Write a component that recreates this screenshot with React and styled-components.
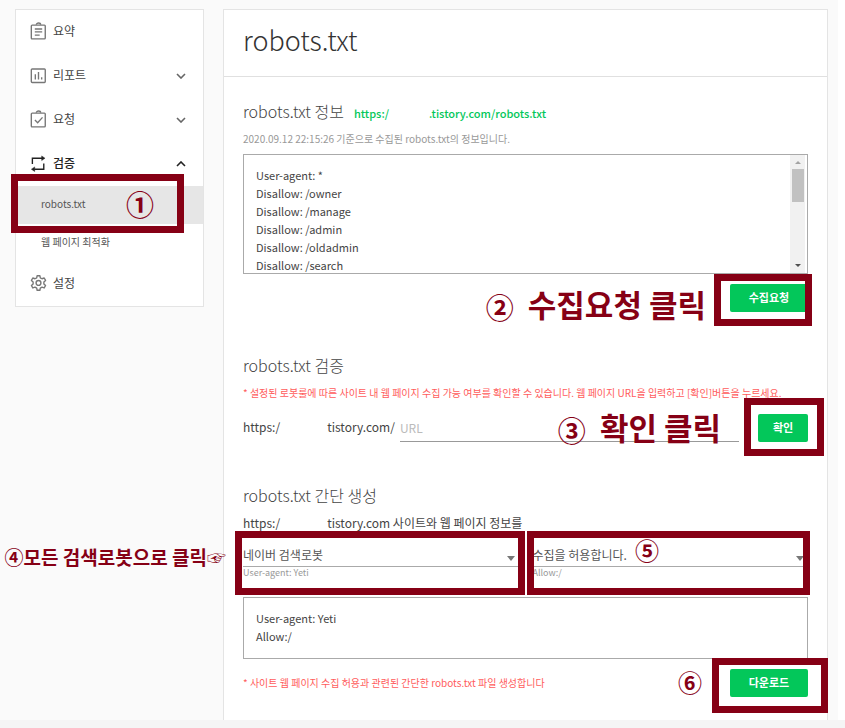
import React, { useState } from "react";
import styled, { createGlobalStyle } from "styled-components";

const GlobalStyle = createGlobalStyle`
  * {
    box-sizing: border-box;
  }

  body {
    margin: 0;
    background: #fff;
    color: #444;
    font-family: "Noto Sans CJK KR", "Noto Sans", sans-serif;
    font-size: 12px;
  }

  button,
  input,
  select,
  textarea {
    font-family: inherit;
    color: inherit;
  }
`;

const Page = styled.div`
  display: flex;
  flex-direction: column;
  min-height: 100vh;
`;

const Layout = styled.div`
  flex: 1;
  display: grid;
  grid-template-columns: 189px minmax(0, 1fr);
  gap: 19px;
  margin-right: 7px;
  padding: 9px 10px 0 15px;
  background: #fafafa;
`;

const PageEnd = styled.footer`
  height: 8px;
  background: #f5f5f5;
`;

const Sidebar = styled.nav`
  align-self: start;
  background: #fff;
  border: 1px solid #e4e4e4;
`;

const NavButton = styled.button`
  display: flex;
  align-items: center;
  gap: 6px;
  width: 100%;
  height: 44px;
  padding: 0 17px 0 14px;
  border: 0;
  background: none;
  color: ${({ $open }) => ($open ? "#222" : "#444")};
  font-size: 12px;
  font-weight: ${({ $open }) => ($open ? 500 : 400)};
  text-align: left;
  cursor: pointer;
`;

const NavLabel = styled.span`
  flex: 1;
  padding-bottom: 4px;
`;

const SubItem = styled.div`
  position: relative;
  background: ${({ $active }) => ($active ? "#e6e6e6" : "#fff")};
`;

const SubLink = styled.a`
  display: block;
  height: 38px;
  padding-left: 25px;
  color: #555;
  font-size: 10px;
  line-height: 36px;
  text-decoration: none;
`;

const Panel = styled.main`
  background: #fff;
  border: 1px solid #e4e4e4;
  border-bottom: 0;
`;

const Title = styled.h1`
  margin: 0;
  padding: 0 19px 6px;
  border-bottom: 1px solid #e0e0e0;
  color: #333;
  font-size: 27px;
  font-weight: 300;
  line-height: 60px;
`;

const Content = styled.div`
  display: grid;
  gap: 42px;
  padding: 23px 19px 22px;
`;

const Section = styled.section`
  display: flex;
  flex-direction: column;
`;

const HeadingRow = styled.div`
  display: flex;
  align-items: baseline;
  gap: 10px;
  height: 24px;
  margin-bottom: 6px;
`;

const Heading = styled.h2`
  margin: 0;
  color: #444;
  font-size: 16px;
  font-weight: 300;
  line-height: 22px;
`;

const SiteLink = styled.a`
  color: #03c75a;
  font-size: 11px;
  font-weight: 500;
  text-decoration: none;
`;

const Blank = styled.span`
  display: inline-block;
  width: ${({ $wide }) => ($wide ? "47px" : "40px")};
`;

const Caption = styled.p`
  margin: 0;
  color: ${({ $warn }) => ($warn ? "#ff5c5c" : "#999")};
  font-size: 10px;
  line-height: 18px;
`;

const Sentence = styled.p`
  margin: 0 0 10px;
  line-height: 18px;
`;

const CodeBox = styled.div`
  display: flex;
  height: ${({ $tall }) => ($tall ? "120px" : "62px")};
  margin-top: ${({ $tall }) => ($tall ? "6px" : "18px")};
  padding-right: 2px;
  border: 1px solid #aaa;
`;

const Code = styled.textarea`
  flex: 1;
  padding: 11px 12px 0;
  border: 0;
  outline: 0;
  background: none;
  font-size: 11px;
  line-height: 18px;
  overflow: hidden;
  resize: none;
`;

const ScrollTrack = styled.div`
  display: flex;
  flex-direction: column;
  align-items: center;
  width: 15px;
  background: #f1f1f1;
`;

const ScrollThumb = styled.div`
  width: 12px;
  height: 33px;
  margin-bottom: auto;
  background: #c1c1c1;
`;

const ScrollArrow = styled.svg`
  width: 14px;
  height: 14px;
  fill: ${({ $muted }) => ($muted ? "#a3a3a3" : "#505050")};
`;

const Actions = styled.div`
  display: flex;
  align-items: center;
  justify-content: ${({ $end }) => ($end ? "flex-end" : "space-between")};
  margin-top: 10px;
`;

const ButtonSlot = styled.div`
  position: relative;
`;

const Button = styled.button`
  display: block;
  width: ${({ $small }) => ($small ? "50px" : "78px")};
  height: 28px;
  padding: 0 0 2px;
  border: 0;
  border-radius: 2px;
  background: #03c75a;
  color: #fff;
  font-size: 11px;
  font-weight: 700;
  cursor: pointer;
`;

const UrlForm = styled.form`
  display: flex;
  gap: 19px;
  margin-top: 12px;
`;

const UrlField = styled.label`
  flex: 1;
  display: flex;
  gap: 5px;
  line-height: 26px;
`;

const UrlInput = styled.input`
  flex: 1;
  min-width: 0;
  height: 28px;
  padding: 0;
  border: 0;
  border-bottom: 1px solid #999;
  outline: 0;
  background: none;
  font-size: 12px;

  &::placeholder {
    color: #bbb;
  }
`;

const Fields = styled.div`
  display: grid;
  grid-template-columns: 1fr 1fr;
  gap: 14px;
`;

const Field = styled.div`
  position: relative;
`;

const Select = styled.select`
  display: block;
  width: 100%;
  height: 25px;
  padding: 0 20px 0 0;
  border: 0;
  border-bottom: 1px solid #aaa;
  border-radius: 0;
  outline: 0;
  background: none;
  color: #555;
  font-size: 12px;
  appearance: none;
`;

const Caret = styled.svg`
  position: absolute;
  top: 14px;
  right: 4px;
  width: 8px;
  height: 5px;
  fill: #777;
  pointer-events: none;
`;

const Hint = styled.label`
  display: block;
  color: #999;
  font-size: 9px;
  line-height: 12px;
`;

// Red marks of the guide, laid over the controls they point at
const Frame = styled.div`
  position: absolute;
  top: ${({ $top }) => $top}px;
  right: ${({ $right }) => $right}px;
  bottom: ${({ $bottom }) => $bottom}px;
  left: ${({ $left }) => $left}px;
  z-index: 1;
  border: 7px solid #860015;
  pointer-events: none;
`;

const Note = styled.div`
  position: absolute;
  top: ${({ $top }) => $top}px;
  right: ${({ $right }) => $right};
  z-index: 2;
  display: flex;
  align-items: center;
  gap: 14px;
  color: #860015;
  font-size: ${({ $size }) => $size || 19}px;
  font-weight: 700;
  line-height: 32px;
  white-space: nowrap;
  pointer-events: none;
`;

const Step = styled.span`
  padding-top: 6px;
  font-size: 28px;
`;

const IconBase = styled.svg`
  width: 17px;
  height: 19px;
  margin-bottom: 2px;
  fill: none;
  stroke: ${({ $dark }) => ($dark ? "#222" : "#777")};
  stroke-width: 1.3;
`;

const ChevronSvg = styled.svg`
  width: 10px;
  height: 6px;
  fill: none;
  stroke: ${({ $up }) => ($up ? "#222" : "#666")};
  stroke-width: 1.6;
`;

const icons = {
  summary: (
    <>
      <rect x="1.2" y="3" width="13.2" height="13" rx="0.8" />
      <path d="M6 2.6a2 1.6 0 0 1 4 0M4.5 6.6h7M4.5 9.4h7M4.5 12.4h4.6" />
    </>
  ),
  report: (
    <>
      <rect x="1.2" y="2.8" width="13.2" height="12.8" rx="0.8" />
      <path d="M5 7.8v5M8 5.6v7.2M11 10.6v2.2" />
    </>
  ),
  request: (
    <>
      <rect x="1.2" y="3" width="13.2" height="13" rx="0.8" />
      <path d="M6 2.6a2 1.6 0 0 1 4 0M4.6 9.4l2.6 2.6 4.6-5" />
    </>
  ),
  verify: (
    <>
      <path d="M2.2 9.4V4h9.6M13 9v5.4H4" />
      <path d="M11 1.8L14.2 4 11 6.2zM4.4 12.2l-3.2 2.2 3.2 2.2z" fill="#222" strokeWidth="0.4" />
    </>
  ),
  settings: (
    <>
      <path
        d="M6.7 1.6h2.6l.4 2 1.6.9 2.1-.7 1.3 2.3-1.6 1.5v1.8l1.6 1.5-1.3 2.3-2.1-.7-1.6.9-.4 2H6.7l-.4-2-1.6-.9-2.1.7-1.3-2.3 1.6-1.5V7.6L1.3 6.1l1.3-2.3 2.1.7 1.6-.9z"
        strokeLinejoin="round"
      />
      <circle cx="8" cy="8.5" r="2.3" />
    </>
  ),
};

const NavItem = ({ icon, label, open, expandable }) => (
  <NavButton type="button" $open={open} aria-expanded={expandable ? !!open : undefined}>
    <IconBase viewBox="0 0 16 18" $dark={open} aria-hidden="true">
      {icons[icon]}
    </IconBase>
    <NavLabel>{label}</NavLabel>
    {expandable && (
      <ChevronSvg viewBox="0 0 10 6" $up={open} aria-hidden="true">
        <path d={open ? "M1 5l4-4 4 4" : "M1 1l4 4 4-4"} />
      </ChevronSvg>
    )}
  </NavButton>
);

const robotsText = [
  "User-agent: *",
  "Disallow: /owner",
  "Disallow: /manage",
  "Disallow: /admin",
  "Disallow: /oldadmin",
  "Disallow: /search",
].join("\n");

const App = () => {
  const [url, setUrl] = useState("");

  return (
    <Page>
      <GlobalStyle />
      <Layout>
        <Sidebar>
          <NavItem icon="summary" label="요약" />
          <NavItem icon="report" label="리포트" expandable />
          <NavItem icon="request" label="요청" expandable />
          <NavItem icon="verify" label="검증" expandable open />
          <SubItem $active>
            <SubLink href="#robots">robots.txt</SubLink>
            <Frame $top={-12} $right={19} $bottom={-9} $left={-5} />
            <Note $top={-4} $right="49px">
              <Step>①</Step>
            </Note>
          </SubItem>
          <SubItem>
            <SubLink href="#optimize">웹 페이지 최적화</SubLink>
          </SubItem>
          <NavItem icon="settings" label="설정" />
        </Sidebar>

        <Panel>
          <Title>robots.txt</Title>
          <Content>
            <Section>
              <HeadingRow>
                <Heading>robots.txt 정보</Heading>
                <SiteLink href="#robots">
                  https:/
                  <Blank />
                  .tistory.com/robots.txt
                </SiteLink>
              </HeadingRow>
              <Caption>2020.09.12 22:15:26 기준으로 수집된 robots.txt의 정보입니다.</Caption>
              <CodeBox $tall>
                <Code readOnly aria-label="robots.txt 정보" value={robotsText} />
                <ScrollTrack>
                  <ScrollArrow viewBox="0 0 14 14" $muted>
                    <path d="M4 9l3-3 3 3z" />
                  </ScrollArrow>
                  <ScrollThumb />
                  <ScrollArrow viewBox="0 0 14 14">
                    <path d="M4 5l3 3 3-3z" />
                  </ScrollArrow>
                </ScrollTrack>
              </CodeBox>
              <Actions $end>
                <ButtonSlot>
                  <Button type="button">수집요청</Button>
                  <Frame $top={-10} $right={-4} $bottom={-14} $left={-16} />
                  <Note $top={1} $right="102px" $size={31}>
                    <Step>②</Step>
                    <span>수집요청 클릭</span>
                  </Note>
                </ButtonSlot>
              </Actions>
            </Section>

            <Section>
              <HeadingRow>
                <Heading>robots.txt 검증</Heading>
              </HeadingRow>
              <Caption $warn>
                * 설정된 로봇룰에 따른 사이트 내 웹 페이지 수집 가능 여부를 확인할 수 있습니다. 웹 페이지 URL을
                입력하고 [확인]버튼을 누르세요.
              </Caption>
              <UrlForm onSubmit={(e) => e.preventDefault()}>
                <UrlField>
                  <span>
                    https:/
                    <Blank $wide />
                    tistory.com/
                  </span>
                  <UrlInput placeholder="URL" value={url} onChange={(e) => setUrl(e.target.value)} />
                </UrlField>
                <ButtonSlot>
                  <Button $small>확인</Button>
                  <Frame $top={-16} $right={-16} $bottom={-14} $left={-14} />
                  <Note $top={-6} $right="87px" $size={31}>
                    <Step>③</Step>
                    <span>확인 클릭</span>
                  </Note>
                </ButtonSlot>
              </UrlForm>
            </Section>

            <Section>
              <HeadingRow>
                <Heading>robots.txt 간단 생성</Heading>
              </HeadingRow>
              <Sentence>
                https:/
                <Blank $wide />
                tistory.com 사이트와 웹 페이지 정보를
              </Sentence>
              <Fields>
                <Field>
                  <Select id="robot">
                    <option>네이버 검색로봇</option>
                    <option>모든 검색로봇</option>
                  </Select>
                  <Caret viewBox="0 0 8 5" aria-hidden="true">
                    <path d="M0 0h8L4 5z" />
                  </Caret>
                  <Hint htmlFor="robot">User-agent: Yeti</Hint>
                  <Frame $top={-11} $right={-6} $bottom={-16} $left={-8} />
                  <Note $top={-1} $right="calc(100% + 17px)">
                    ④모든 검색로봇으로 클릭☞
                  </Note>
                </Field>
                <Field>
                  <Select id="rule">
                    <option>수집을 허용합니다.</option>
                    <option>수집을 허용하지 않습니다.</option>
                  </Select>
                  <Caret viewBox="0 0 8 5" aria-hidden="true">
                    <path d="M0 0h8L4 5z" />
                  </Caret>
                  <Hint htmlFor="rule">Allow:/</Hint>
                  <Frame $top={-11} $right={-2} $bottom={-16} $left={-6} />
                  <Note $top={-8} $right="149px" $size={24}>
                    ⑤
                  </Note>
                </Field>
              </Fields>
              <CodeBox>
                <Code readOnly aria-label="robots.txt 간단 생성" value={"User-agent: Yeti\nAllow:/"} />
              </CodeBox>
              <Actions>
                <Caption $warn>* 사이트 웹 페이지 수집 허용과 관련된 간단한 robots.txt 파일 생성합니다</Caption>
                <ButtonSlot>
                  <Button type="button">다운로드</Button>
                  <Frame $top={-11} $right={-20} $bottom={-16} $left={-18} />
                  <Note $top={-3} $right="106px" $size={24}>
                    ⑥
                  </Note>
                </ButtonSlot>
              </Actions>
            </Section>
          </Content>
        </Panel>
      </Layout>
      <PageEnd />
    </Page>
  );
};

export default App;
